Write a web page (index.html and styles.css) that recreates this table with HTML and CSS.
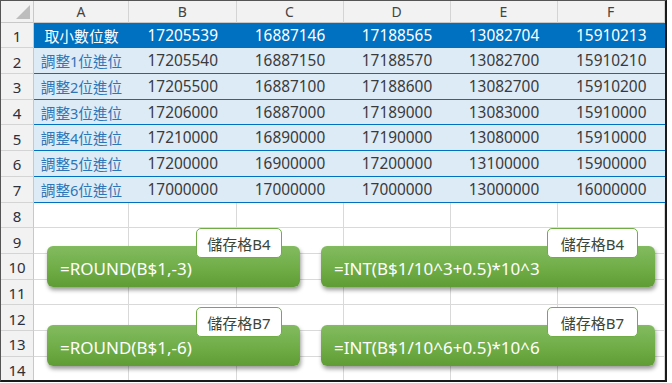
FILE: index.html
```html
<!DOCTYPE html>
<html lang="zh-Hant">
<head>
<meta charset="utf-8">
<link rel="stylesheet" href="styles.css">
</head>
<body>
<div class="frame">
  <div class="sheet">
    <div class="corner"><span class="tri"></span></div>
    <div class="ch">A</div><div class="ch">B</div><div class="ch">C</div><div class="ch">D</div><div class="ch">E</div><div class="ch">F</div>

    <div class="rh">1</div><div class="c head">取小數位數</div><div class="c head n">17205539</div><div class="c head n">16887146</div><div class="c head n">17188565</div><div class="c head n">13082704</div><div class="c head n">15910213</div>

    <div class="rh">2</div><div class="c data lbl">調整1位進位</div><div class="c data n">17205540</div><div class="c data n">16887150</div><div class="c data n">17188570</div><div class="c data n">13082700</div><div class="c data n">15910210</div>

    <div class="rh">3</div><div class="c data lbl">調整2位進位</div><div class="c data n">17205500</div><div class="c data n">16887100</div><div class="c data n">17188600</div><div class="c data n">13082700</div><div class="c data n">15910200</div>

    <div class="rh">4</div><div class="c data lbl">調整3位進位</div><div class="c data n">17206000</div><div class="c data n">16887000</div><div class="c data n">17189000</div><div class="c data n">13083000</div><div class="c data n">15910000</div>

    <div class="rh">5</div><div class="c data lbl">調整4位進位</div><div class="c data n">17210000</div><div class="c data n">16890000</div><div class="c data n">17190000</div><div class="c data n">13080000</div><div class="c data n">15910000</div>

    <div class="rh">6</div><div class="c data lbl">調整5位進位</div><div class="c data n">17200000</div><div class="c data n">16900000</div><div class="c data n">17200000</div><div class="c data n">13100000</div><div class="c data n">15900000</div>

    <div class="rh">7</div><div class="c data lbl">調整6位進位</div><div class="c data n">17000000</div><div class="c data n">17000000</div><div class="c data n">17000000</div><div class="c data n">13000000</div><div class="c data n">16000000</div>

    <div class="rh">8</div><div class="c"></div><div class="c"></div><div class="c"></div><div class="c"></div><div class="c"></div><div class="c"></div>
    <div class="rh">9</div><div class="c"></div><div class="c"></div><div class="c"></div><div class="c"></div><div class="c"></div><div class="c"></div>
    <div class="rh">10</div><div class="c"></div><div class="c"></div><div class="c"></div><div class="c"></div><div class="c"></div><div class="c"></div>
    <div class="rh">11</div><div class="c"></div><div class="c"></div><div class="c"></div><div class="c"></div><div class="c"></div><div class="c"></div>
    <div class="rh">12</div><div class="c"></div><div class="c"></div><div class="c"></div><div class="c"></div><div class="c"></div><div class="c"></div>
    <div class="rh">13</div><div class="c"></div><div class="c"></div><div class="c"></div><div class="c"></div><div class="c"></div><div class="c"></div>
    <div class="rh">14</div><div class="c"></div><div class="c"></div><div class="c"></div><div class="c"></div><div class="c"></div><div class="c"></div>
  </div>

  <div class="callout left top">=ROUND(B$1,-3)</div>
  <div class="tag tag-left tag-top">儲存格B4</div>
  <div class="callout right top">=INT(B$1/10^3+0.5)*10^3</div>
  <div class="tag tag-right tag-top">儲存格B4</div>

  <div class="callout left bottom">=ROUND(B$1,-6)</div>
  <div class="tag tag-left tag-bottom">儲存格B7</div>
  <div class="callout right bottom">=INT(B$1/10^6+0.5)*10^6</div>
  <div class="tag tag-right tag-bottom">儲存格B7</div>
</div>
</body>
</html>
```

FILE: styles.css
```css
html, body {
  margin: 0;
  padding: 0;
  background: #ffffff;
}

body {
  width: 672px;
  height: 383px;
  overflow: hidden;
  font-family: "Noto Sans", "Noto Sans CJK TC", sans-serif;
}

.frame {
  position: relative;
  width: 664px;
  height: 379px;
  border-top: 1px solid #555555;
  border-left: 1px solid #555555;
  border-right: 2px solid #1a1a1a;
  border-bottom: 2px solid #1a1a1a;
  overflow: hidden;
  background: #ffffff;
}

.sheet {
  display: grid;
  grid-template-columns: 33px 95px 107.5px 107px 107px 107px 107.5px;
  grid-template-rows: 21.7px repeat(14, 25.7px);
}

.corner {
  position: relative;
  background: #f2f2f2;
  border-right: 1px solid #c8c8c8;
  border-bottom: 1px solid #c8c8c8;
}

.tri {
  position: absolute;
  right: 3px;
  bottom: 3px;
  width: 0;
  height: 0;
  border-left: 14px solid transparent;
  border-bottom: 14px solid #bdbdbd;
}

.ch {
  background: #f2f2f2;
  border-right: 1px solid #d4d4d4;
  border-bottom: 1px solid #c8c8c8;
  display: flex;
  align-items: center;
  justify-content: center;
  font-size: 14px;
  color: #444444;
  padding-top: 1px;
}

.rh {
  background: #f2f2f2;
  border-right: 1px solid #c8c8c8;
  border-bottom: 1px solid #d4d4d4;
  display: flex;
  align-items: center;
  justify-content: center;
  font-size: 15px;
  color: #2f2f3a;
  padding-top: 2px;
}

.c {
  border-right: 1px solid #d9d9d9;
  border-bottom: 1px solid #d9d9d9;
  display: flex;
  align-items: center;
  justify-content: center;
  white-space: nowrap;
}

.n {
  font-size: 15.4px;
}

.head {
  background: #0070c0;
  color: #ffffff;
  border-right: none;
  border-bottom: none;
  font-size: 14.8px;
}

.head.n {
  font-size: 15.4px;
}

.data {
  background: #ddebf7;
  color: #3a3a3a;
  border-right: none;
  border-bottom: 1px solid #0070c0;
}

.lbl {
  color: #2e75b6;
  font-size: 14.6px;
}

.callout {
  position: absolute;
  height: 41px;
  box-sizing: border-box;
  padding: 3px 0 0 13px;
  display: flex;
  align-items: center;
  border-radius: 6px;
  background: linear-gradient(to bottom, #82bb60 0%, #70ad47 55%, #5f9c36 100%);
  box-shadow: 1px 3px 4px rgba(0, 0, 0, 0.4);
  color: #ffffff;
  font-size: 17px;
  white-space: nowrap;
}

.callout.left { left: 46px; width: 253px; }
.callout.right { left: 320px; width: 334px; }
.callout.top { top: 245px; }
.callout.bottom { top: 324px; }

.tag {
  position: absolute;
  height: 30px;
  box-sizing: border-box;
  border: 1px solid #70ad47;
  border-radius: 5px;
  background: #ffffff;
  display: flex;
  align-items: center;
  justify-content: center;
  font-size: 15px;
  color: #3c4636;
  white-space: nowrap;
}

.tag-left { left: 195px; width: 86px; }
.tag-right { left: 546px; width: 91px; }
.tag-top { top: 227px; }
.tag-bottom { top: 306px; }
```
